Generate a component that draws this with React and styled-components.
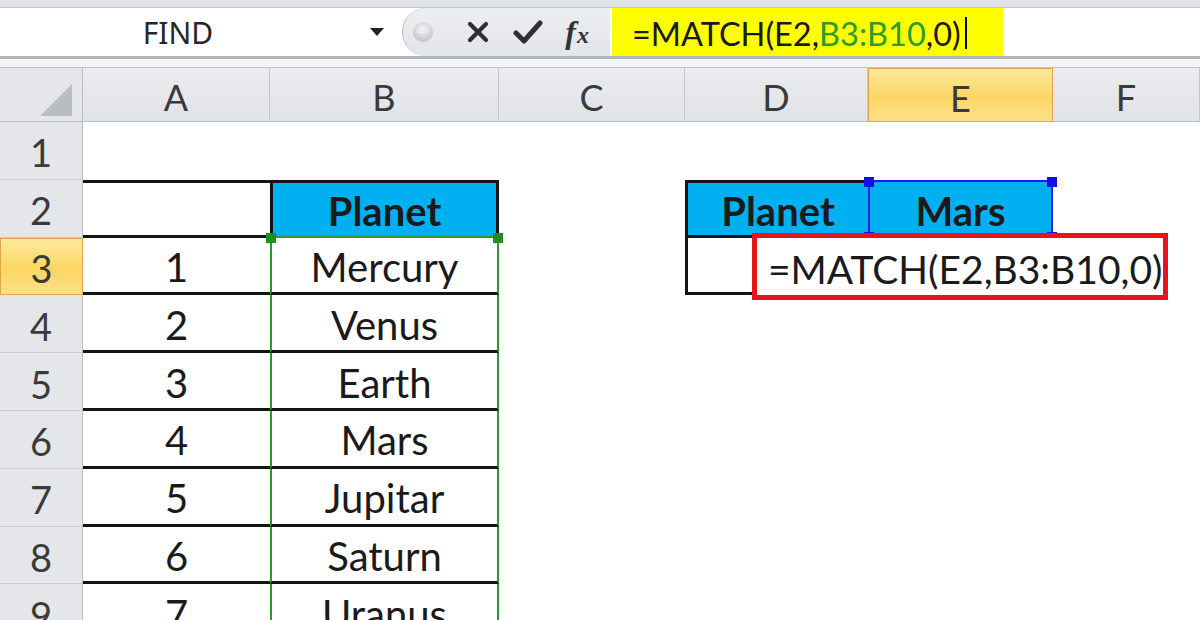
import styled, { createGlobalStyle } from "styled-components";

const GlobalStyle = createGlobalStyle`
  * { box-sizing: border-box; }
  body {
    margin: 0;
    width: 1200px;
    height: 620px;
    overflow: hidden;
    background: #ffffff;
    font-family: Lato, "Liberation Sans", sans-serif;
  }
`;

const Window = styled.div`
  width: 1200px;
  height: 620px;
  overflow: hidden;
`;

const TopStrip = styled.div`
  height: 7px;
  background: #dfe2e6;
`;

const BarRow = styled.div`
  height: 50px;
  display: flex;
  background: #ffffff;
  border-top: 1px solid #c3c7cc;
  border-bottom: 1px solid #b4b8be;
`;

const NameBox = styled.div`
  width: 402px;
  display: flex;
  align-items: center;
`;

const NameText = styled.div`
  width: 356px;
  text-align: center;
  font-family: "Noto Sans", "Open Sans", sans-serif;
  font-size: 30px;
  color: #262626;
`;

const Arrow = styled.div`
  flex: 1;
  display: flex;
  align-items: center;
  padding-left: 14px;
`;

const FxGroup = styled.div`
  width: 208px;
  display: flex;
  align-items: center;
  background: linear-gradient(#eceef1, #e2e5e9);
  border-left: 1px solid #b9bdc3;
  border-radius: 26px 0 0 26px;
`;

const Slot = styled.div`
  width: ${(p) => p.$w}px;
  display: flex;
  justify-content: center;
  align-items: center;
`;

const FxText = styled.span`
  font-family: "Liberation Serif", serif;
  font-style: italic;
  font-weight: bold;
  font-size: 32px;
  color: #333;

  small {
    font-size: 24px;
    margin-left: 1px;
  }
`;

const FormulaField = styled.div`
  flex: 1;
  display: flex;
  align-items: stretch;
  padding-left: 2px;
`;

const Highlight = styled.div`
  width: 391px;
  background: #ffff00;
  display: flex;
  align-items: center;
  padding: 2px 0 0 20px;
  font-family: Lato, "Liberation Sans", sans-serif;
  font-size: 32.5px;
  color: #1a1a1a;
`;

const Ref = styled.span`
  color: ${(p) => p.$color};
`;

const Caret = styled.span`
  display: inline-block;
  width: 2px;
  height: 32px;
  margin-left: 4px;
  background: #000;
`;

const Splitter = styled.div`
  height: 11px;
  background: #f3f4f6;
  border-top: 2px solid #b3b7bd;
  border-bottom: 1px solid #bfc3c8;
`;

const Sheet = styled.div`
  position: relative;
  display: grid;
  grid-template-columns: 83px 187px 229px 186px 183px 185px 1fr;
  grid-template-rows: 54px repeat(9, 57.8px);
`;

const Corner = styled.div`
  background: #e4e6ea;
  border-right: 1px solid #b9bdc3;
  border-bottom: 1px solid #b9bdc3;
  display: flex;
  align-items: flex-end;
  justify-content: flex-end;
  padding: 0 10px 5px 0;
`;

const activeHead = `
  background: linear-gradient(#fde89a, #fcd664 55%, #fde08a);
  border: 1px solid #e2a64a;
`;

const ColHead = styled.div`
  display: flex;
  align-items: center;
  justify-content: center;
  padding-top: 5px;
  background: linear-gradient(#eaecef, #e0e3e7);
  border-right: 1px solid #c3c7cc;
  border-bottom: 1px solid #b9bdc3;
  font-size: 36px;
  color: #3a3a3a;
  ${(p) => p.$active && activeHead}
`;

const RowHead = styled.div`
  display: flex;
  align-items: center;
  justify-content: center;
  padding-top: 4px;
  background: #e4e6ea;
  border-right: 1px solid #b9bdc3;
  border-bottom: 1px solid #c8ccd1;
  font-size: 38px;
  color: #3a3a3a;
  ${(p) => p.$active && activeHead}
`;

const Cell = styled.div`
  position: relative;
  display: flex;
  align-items: center;
  justify-content: center;
  padding-top: 4px;
  font-size: 40px;
  color: #1a1a1a;
  font-weight: ${(p) => (p.$bold ? 700 : 400)};
  background: ${(p) => p.$fill || "transparent"};
  border-top: ${(p) => p.$bt || "none"};
  border-bottom: ${(p) => p.$bb || "none"};
  border-left: ${(p) => p.$bl || "none"};
  border-right: ${(p) => p.$br || "none"};
`;

const Handle = styled.span`
  position: absolute;
  width: 10px;
  height: 10px;
  background: ${(p) => p.$color};
  ${(p) => (p.$v === "top" ? "top: -5px;" : "bottom: -6px;")}
  ${(p) => (p.$h === "left" ? "left: -6px;" : "right: -6px;")}
  z-index: 2;
`;

const Editor = styled.div`
  position: absolute;
  left: 752px;
  top: 165px;
  width: 416px;
  height: 67px;
  border: 5px solid #e8141b;
  background: #ffffff;
  display: flex;
  align-items: center;
  padding: 4px 0 0 11px;
  font-size: 39px;
  color: #1a1a1a;
  z-index: 3;
`;

const BLACK = "3px solid #141414";
const GREEN = "2px solid #2d9a2d";
const BLUE = "2px solid #1c1cf0";
const SKY = "#00b0f0";
const FORMULA = "=MATCH(E2,B3:B10,0)";

const planets = ["Mercury", "Venus", "Earth", "Mars", "Jupitar", "Saturn", "Uranus"];
const cols = ["A", "B", "C", "D", "E", "F"];

function FormulaBar() {
  return (
    <>
      <TopStrip />
      <BarRow>
        <NameBox>
          <NameText>FIND</NameText>
          <Arrow>
            <svg width="14" height="8" viewBox="0 0 14 8">
              <path d="M0 0 H14 L7 8 Z" fill="#222" />
            </svg>
          </Arrow>
        </NameBox>
        <FxGroup>
          <Slot $w={40}>
            <svg width="22" height="22" viewBox="0 0 22 22">
              <defs>
                <radialGradient id="btn" cx="50%" cy="35%" r="60%">
                  <stop offset="0%" stopColor="#f4f4f4" />
                  <stop offset="100%" stopColor="#c4c6c9" />
                </radialGradient>
              </defs>
              <circle cx="11" cy="11" r="10" fill="url(#btn)" />
              <rect x="5" y="9" width="12" height="3" fill="#e9eaec" />
            </svg>
          </Slot>
          <Slot $w={70}>
            <svg width="24" height="24" viewBox="0 0 24 24">
              <path d="M4 4 L20 20 M20 4 L4 20" stroke="#303030" strokeWidth="4.2" strokeLinecap="round" />
            </svg>
          </Slot>
          <Slot $w={32}>
            <svg width="30" height="26" viewBox="0 0 30 26">
              <path d="M3 14 L11 22 L27 4" stroke="#303030" strokeWidth="5" fill="none" strokeLinecap="round" strokeLinejoin="round" />
            </svg>
          </Slot>
          <Slot $w={66}>
            <FxText>
              f<small>x</small>
            </FxText>
          </Slot>
        </FxGroup>
        <FormulaField>
          <Highlight>
            =MATCH(<Ref $color="#1a1a1a">E2</Ref>,<Ref $color="#2d9a2d">B3:B10</Ref>,0)
            <Caret />
          </Highlight>
        </FormulaField>
      </BarRow>
      <Splitter />
    </>
  );
}

function cellProps(row, col) {
  // row: 1..9, col index 0..5 (A..F)
  const p = {};
  if (col === 0 && row >= 2) {
    if (row === 2) p.$bt = BLACK;
    p.$bb = BLACK;
    if (row >= 3) p.children = row - 2;
  }
  if (col === 1 && row >= 2) {
    if (row === 2) {
      p.$bt = BLACK;
      p.$bl = BLACK;
      p.$br = BLACK;
      p.$fill = SKY;
      p.$bold = true;
      p.children = "Planet";
    } else {
      p.$bl = GREEN;
      p.$br = GREEN;
      p.children = planets[row - 3];
    }
    p.$bb = row === 2 ? GREEN : BLACK;
  }
  if (col === 3 && row === 2) {
    p.$bt = BLACK;
    p.$bl = BLACK;
    p.$bb = BLACK;
    p.$fill = SKY;
    p.$bold = true;
    p.children = "Planet";
  }
  if (col === 3 && row === 3) {
    p.$bl = BLACK;
    p.$bb = BLACK;
  }
  if (col === 4 && row === 2) {
    p.$bt = BLUE;
    p.$bl = BLUE;
    p.$br = BLUE;
    p.$bb = BLUE;
    p.$fill = SKY;
    p.$bold = true;
    p.children = "Mars";
  }
  if (col === 4 && row === 3) {
    p.$br = BLACK;
    p.$bb = BLACK;
  }
  return p;
}

function Row({ r }) {
  return (
    <>
      <RowHead $active={r === 3}>{r}</RowHead>
      {cols.map((c, i) => {
        const { children, ...rest } = cellProps(r, i);
        return (
          <Cell key={c} {...rest}>
            {children}
            {r === 3 && c === "B" && (
              <>
                <Handle $color="#1f8f1f" $v="top" $h="left" />
                <Handle $color="#1f8f1f" $v="top" $h="right" />
              </>
            )}
            {r === 2 && c === "E" && (
              <>
                <Handle $color="#1010ee" $v="top" $h="left" />
                <Handle $color="#1010ee" $v="top" $h="right" />
                <Handle $color="#1010ee" $v="bottom" $h="left" />
                <Handle $color="#1010ee" $v="bottom" $h="right" />
              </>
            )}
            {r === 3 && c === "E" && <Handle $color="#141414" $v="bottom" $h="right" />}
          </Cell>
        );
      })}
    </>
  );
}

function Grid() {
  const rows = [1, 2, 3, 4, 5, 6, 7, 8, 9];
  return (
    <Sheet>
      <Corner>
        <svg width="32" height="32" viewBox="0 0 32 32">
          <path d="M0 32 H32 V0 Z" fill="#b9bcc1" />
        </svg>
      </Corner>
      {cols.map((c) => (
        <ColHead key={c} $active={c === "E"}>
          {c}
        </ColHead>
      ))}
      {rows.map((r) => (
        <Row key={r} r={r} />
      ))}
      <Editor>{FORMULA}</Editor>
    </Sheet>
  );
}

export default function App() {
  return (
    <>
      <GlobalStyle />
      <Window>
        <FormulaBar />
        <Grid />
      </Window>
    </>
  );
}
